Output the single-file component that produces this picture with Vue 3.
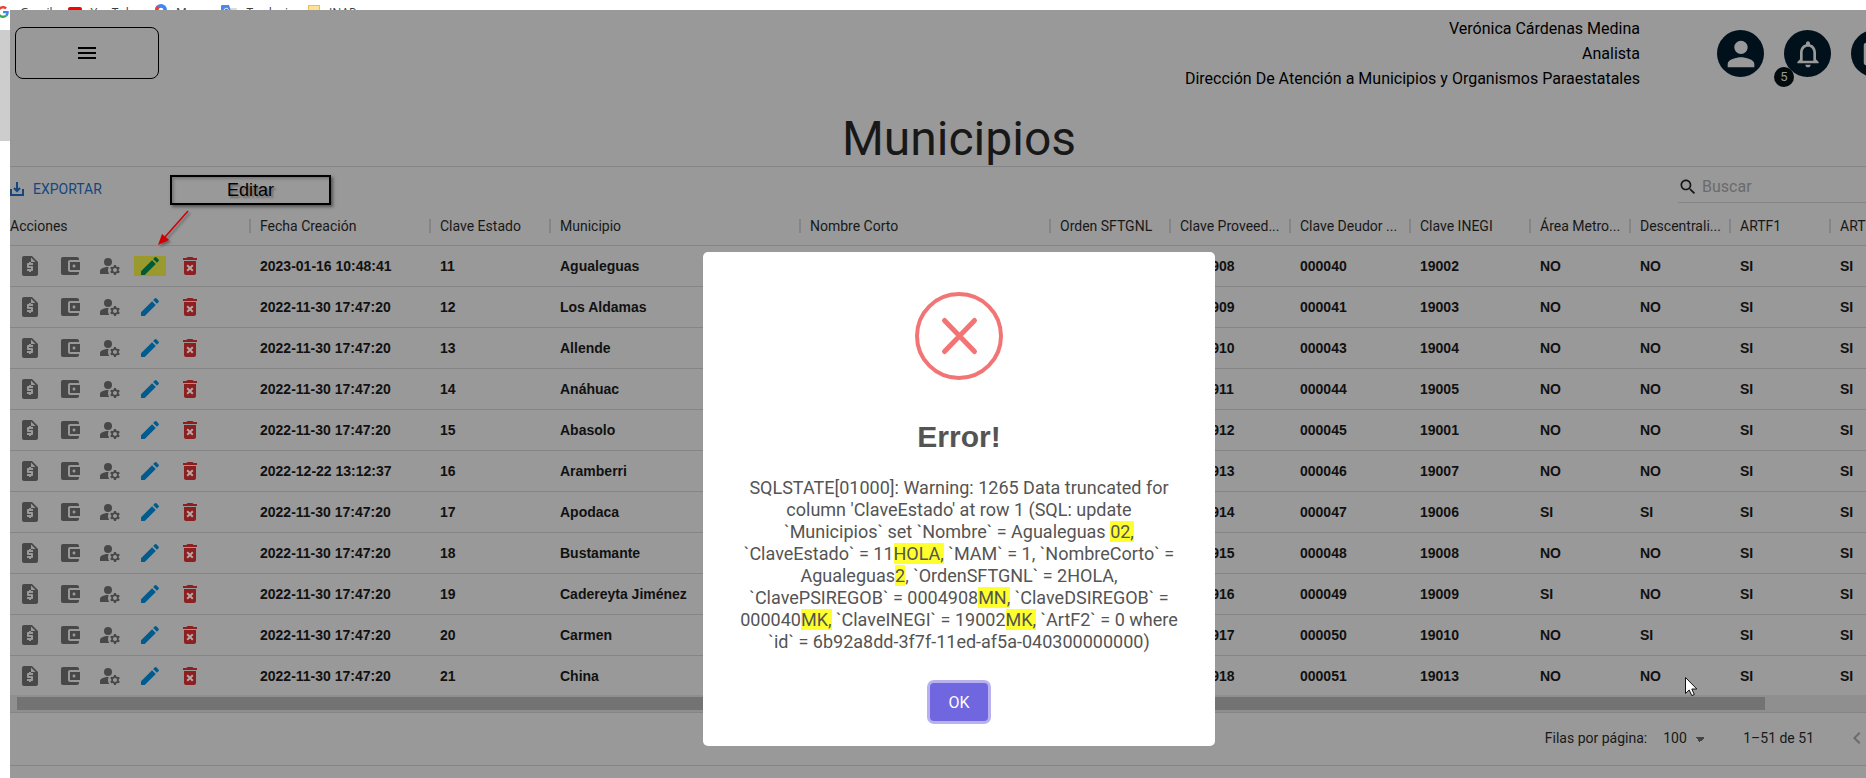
<script setup>
const bookmarks = [
  { name: 'Gmail', icon: 'none' },
  { name: 'YouTube', icon: 'youtube' },
  { name: 'Maps', icon: 'maps' },
  { name: 'Traducir', icon: 'translate' },
  { name: 'INAP', icon: 'folder' },
]

const columns = [
  { title: 'Acciones', cls: 'w-actions' },
  { title: 'Fecha Creación', cls: 'w-date' },
  { title: 'Clave Estado', cls: 'w-md' },
  { title: 'Municipio', cls: 'w-lg' },
  { title: 'Nombre Corto', cls: 'w-lg' },
  { title: 'Orden SFTGNL', cls: 'w-md' },
  { title: 'Clave Proveed...', cls: 'w-md' },
  { title: 'Clave Deudor ...', cls: 'w-md' },
  { title: 'Clave INEGI', cls: 'w-md' },
  { title: 'Área Metro...', cls: 'w-sm' },
  { title: 'Descentrali...', cls: 'w-sm' },
  { title: 'ARTF1', cls: 'w-sm' },
  { title: 'ARTF2', cls: 'w-sm' },
]

const old = '2022-11-30 17:47:20'
const rows = [
  ['2023-01-16 10:48:41', '11', 'Agualeguas', '0004908', '000040', '19002', 'NO', 'NO'],
  [old, '12', 'Los Aldamas', '0004909', '000041', '19003', 'NO', 'NO'],
  [old, '13', 'Allende', '0004910', '000043', '19004', 'NO', 'NO'],
  [old, '14', 'Anáhuac', '0004911', '000044', '19005', 'NO', 'NO'],
  [old, '15', 'Abasolo', '0004912', '000045', '19001', 'NO', 'NO'],
  ['2022-12-22 13:12:37', '16', 'Aramberri', '0004913', '000046', '19007', 'NO', 'NO'],
  [old, '17', 'Apodaca', '0004914', '000047', '19006', 'SI', 'SI'],
  [old, '18', 'Bustamante', '0004915', '000048', '19008', 'NO', 'NO'],
  [old, '19', 'Cadereyta Jiménez', '0004916', '000049', '19009', 'SI', 'NO'],
  [old, '20', 'Carmen', '0004917', '000050', '19010', 'NO', 'SI'],
  [old, '21', 'China', '0004918', '000051', '19013', 'NO', 'NO'],
].map(([date, state, name, prov, deb, inegi, metro, desc]) => ({
  state,
  cells: [date, state, name, '', '', prov, deb, inegi, metro, desc, 'SI', 'SI'],
}))
</script>

<template>
  <div class="window">
    <nav class="bookmarks" aria-label="Marcadores">
      <a v-for="b in bookmarks" :key="b.name" href="#" class="bookmark" :class="'bm-' + b.icon">
        <svg v-if="b.icon === 'youtube'" width="14" height="10" viewBox="0 0 14 10"><rect width="14" height="10" rx="2" fill="#f00" /><path d="M5.500 3v4l4-2z" fill="#fff" /></svg>
        <svg v-else-if="b.icon === 'maps'" width="12" height="16" viewBox="0 0 12 16"><path d="M6 0a6 6 0 0 0-6 6c0 4 6 10 6 10s6-6 6-10a6 6 0 0 0-6-6" fill="#4285f4" /><path d="M0 6a6 6 0 0 1 2-4.500L5 4 1 9z" fill="#ea4335" /><circle cx="6" cy="6" r="2.300" fill="#fff" /></svg>
        <svg v-else-if="b.icon === 'translate'" width="16" height="16" viewBox="0 0 16 16"><rect x="6" y="3" width="10" height="12" rx="1" fill="#dadce0" /><path d="M1 0h7l4 12H1a1 1 0 0 1-1-1V1a1 1 0 0 1 1-1" fill="#4f86ec" /><path d="M7.500 4.500a2.500 2.500 0 1 0 .3 2H5.500" fill="none" stroke="#fff" /></svg>
        <svg v-else-if="b.icon === 'folder'" width="12" height="14" viewBox="0 0 12 14"><rect x=".5" y=".5" width="11" height="13" fill="#fde293" stroke="#e9c04a" /></svg>
        <span>{{ b.name }}</span>
      </a>
    </nav>
    <svg class="google" width="12" height="12" viewBox="0 0 48 48" aria-hidden="true">
      <path fill="#EA4335" d="M24 9.500c3.540 0 6.710 1.220 9.210 3.600l6.850-6.850C35.900 2.380 30.470 0 24 0 14.620 0 6.510 5.380 2.560 13.220l7.980 6.190C12.430 13.720 17.740 9.500 24 9.500z" />
      <path fill="#4285F4" d="M46.980 24.550c0-1.570-.15-3.090-.38-4.550H24v9.020h12.940c-.58 2.960-2.260 5.480-4.780 7.180l7.730 6c4.510-4.180 7.090-10.360 7.090-17.650z" />
      <path fill="#FBBC05" d="M10.530 28.590A14.500 14.500 0 0 1 9.770 24c0-1.600.27-3.140.76-4.590l-7.980-6.190A24 24 0 0 0 0 24c0 3.880.92 7.540 2.560 10.780z" />
      <path fill="#34A853" d="M24 48c6.480 0 11.930-2.130 15.890-5.810l-7.730-6c-2.150 1.450-4.920 2.300-8.160 2.300-6.260 0-11.570-4.220-13.470-9.910l-7.980 6.190C6.510 42.620 14.620 48 24 48z" />
    </svg>
    <div class="side-strip"></div>

    <main class="page">
      <header class="topbar">
        <button class="menu-btn" aria-label="Menú">
          <svg width="24" height="24" viewBox="0 0 24 24"><path d="M3 18h18v-2H3zm0-5h18v-2H3zm0-7v2h18V6z" /></svg>
        </button>
        <div class="user">
          <p>Verónica Cárdenas Medina</p>
          <p>Analista</p>
          <p>Dirección De Atención a Municipios y Organismos Paraestatales</p>
        </div>
        <div class="quick">
          <button class="round" aria-label="Perfil">
            <svg width="40" height="40" viewBox="0 0 24 24"><path d="M12 12c2.210 0 4-1.790 4-4s-1.790-4-4-4-4 1.790-4 4 1.790 4 4 4m0 2c-2.670 0-8 1.340-8 4v2h16v-2c0-2.660-5.330-4-8-4" /></svg>
          </button>
          <button class="round" aria-label="Notificaciones">
            <svg width="32" height="32" viewBox="0 0 24 24"><path d="M12 22c1.100 0 2-.9 2-2h-4c0 1.100.9 2 2 2m6-6v-5c0-3.070-1.630-5.640-4.500-6.320V4c0-.83-.67-1.500-1.500-1.500s-1.500.67-1.500 1.500v.68C7.640 5.360 6 7.920 6 11v5l-2 2v1h16v-1zm-2 1H8v-6c0-2.480 1.510-4.500 4-4.500s4 2.020 4 4.500z" /></svg>
            <span class="badge">5</span>
          </button>
          <button class="round" aria-label="Calendario">
            <svg width="30" height="30" viewBox="0 0 24 24"><path d="M19 3h-1V1h-2v2H8V1H6v2H5c-1.110 0-2 .9-2 2v14c0 1.100.89 2 2 2h14c1.100 0 2-.9 2-2V5c0-1.100-.9-2-2-2m0 16H5V8h14zM7 10h5v5H7z" /></svg>
          </button>
        </div>
      </header>

      <h1>Municipios</h1>

      <section class="grid">
        <div class="toolbar">
          <button class="export">
            <svg width="16" height="16" viewBox="0 0 16 16"><path d="M2 8v6h12V8M8 1v9M5 7l3 3 3-3" fill="none" stroke="currentColor" stroke-width="2" /></svg>
            EXPORTAR
          </button>
          <label class="search">
            <svg width="20" height="20" viewBox="0 0 24 24"><path d="M15.500 14h-.79l-.28-.27C15.410 12.590 16 11.110 16 9.500 16 5.910 13.090 3 9.500 3S3 5.910 3 9.500 5.910 16 9.500 16c1.610 0 3.090-.59 4.230-1.570l.27.28v.79l5 4.990L20.490 19zm-6 0C7.010 14 5 11.990 5 9.500S7.010 5 9.500 5 14 7.010 14 9.500 11.990 14 9.500 14" /></svg>
            <input type="text" placeholder="Buscar" aria-label="Buscar" />
          </label>
        </div>

        <table>
          <thead>
            <tr>
              <th v-for="c in columns" :key="c.title" scope="col" :class="c.cls"><span>{{ c.title }}</span></th>
            </tr>
          </thead>
          <tbody>
            <tr v-for="(r, i) in rows" :key="r.state">
              <td>
                <div class="actions">
                  <button aria-label="Solicitud"><svg viewBox="0 0 24 24"><path d="M14 2H6c-1.100 0-1.990.9-1.990 2L4 20c0 1.100.89 2 1.990 2H18c1.100 0 2-.9 2-2V8zm1 9h-4v1h3c.55 0 1 .45 1 1v3c0 .55-.45 1-1 1h-1v1h-2v-1H9v-2h4v-1h-3c-.55 0-1-.45-1-1v-3c0-.55.45-1 1-1h1V8h2v1h2zm-2-3V3.500L17.500 8z" /></svg></button>
                  <button aria-label="Cuentas"><svg viewBox="0 0 24 24"><path d="M21 18v1c0 1.100-.9 2-2 2H5c-1.110 0-2-.9-2-2V5c0-1.100.89-2 2-2h14c1.100 0 2 .9 2 2v1h-9c-1.110 0-2 .9-2 2v8c0 1.100.89 2 2 2zm-9-2h10V8H12zm4-2.500c-.83 0-1.500-.67-1.500-1.500s.67-1.500 1.500-1.500 1.500.67 1.500 1.500-.67 1.500-1.500 1.500" /></svg></button>
                  <button aria-label="Usuarios"><svg viewBox="0 0 24 24"><circle cx="10" cy="8" r="4" /><path d="M10.670 13.020c-.22-.01-.44-.02-.67-.02-2.420 0-4.680.67-6.610 1.820-.88.52-1.390 1.500-1.390 2.530V20h9.260c-.79-1.130-1.260-2.510-1.260-4 0-1.070.25-2.070.67-2.980M20.750 16c0-.22-.03-.42-.06-.63l1.140-1.010-1-1.730-1.450.49c-.32-.27-.68-.48-1.080-.63L18 11h-2l-.3 1.490c-.4.15-.76.36-1.080.63l-1.450-.49-1 1.730 1.140 1.010c-.03.21-.06.410-.06.63s.03.42.06.63l-1.140 1.010 1 1.730 1.450-.49c.32.27.68.48 1.080.63L16 21h2l.3-1.490c.4-.15.76-.36 1.080-.63l1.450.49 1-1.730-1.140-1.010c.03-.21.06-.410.06-.63M17 18c-1.100 0-2-.9-2-2s.9-2 2-2 2 .9 2 2-.9 2-2 2" /></svg></button>
                  <button class="edit" :class="{ marked: i === 0 }" aria-label="Editar"><svg viewBox="0 0 24 24"><path d="M3 17.250V21h3.750L17.810 9.940l-3.750-3.750zM20.710 7.040c.39-.39.39-1.020 0-1.410l-2.340-2.340a.996.996 0 0 0-1.410 0l-1.830 1.830 3.750 3.750z" /></svg></button>
                  <button class="delete" aria-label="Eliminar"><svg viewBox="0 0 24 24"><path class="cross" d="M8 10h8v8H8z" /><path d="M6 19c0 1.100.9 2 2 2h8c1.100 0 2-.9 2-2V7H6zm2.460-7.120 1.410-1.410L12 12.590l2.120-2.120 1.410 1.410L13.410 14l2.120 2.120-1.410 1.410L12 15.410l-2.120 2.120-1.410-1.410L10.590 14zM15.500 4l-1-1h-5l-1 1H5v2h14V4z" /></svg></button>
                </div>
              </td>
              <td v-for="(cell, j) in r.cells" :key="j">{{ cell }}</td>
            </tr>
          </tbody>
        </table>

        <div class="scroll"><div class="thumb"></div></div>

        <footer class="pager">
          <label for="per-page">Filas por página:</label>
          <select id="per-page"><option>100</option></select>
          <span class="range">1–51 de 51</span>
          <button aria-label="Página anterior"><svg width="24" height="24" viewBox="0 0 24 24"><path d="M15.410 7.410 14 6l-6 6 6 6 1.410-1.410L10.830 12z" /></svg></button>
        </footer>
      </section>

      <div class="backdrop">
        <div class="modal" role="dialog" aria-labelledby="err-title">
          <svg class="err-icon" width="88" height="88" viewBox="0 0 88 88"><circle cx="44" cy="44" r="42" /><path class="x" d="M29.500 28.500l30 31M59.500 28.500l-30 31" /></svg>
          <h2 id="err-title">Error!</h2>
          <p class="message">
            SQLSTATE[01000]: Warning: 1265 Data truncated for<br />
            column 'ClaveEstado' at row 1 (SQL: update<br />
            `Municipios` set `Nombre` = Agualeguas <mark>02,</mark><br />
            `ClaveEstado` = 11<mark>HOLA,</mark> `MAM` = 1, `NombreCorto` =<br />
            Agualeguas<mark>2</mark>, `OrdenSFTGNL` = 2HOLA,<br />
            `ClavePSIREGOB` = 0004908<mark>MN,</mark> `ClaveDSIREGOB` =<br />
            000040<mark>MK,</mark> `ClaveINEGI` = 19002<mark>MK,</mark> `ArtF2` = 0 where<br />
            `id` = 6b92a8dd-3f7f-11ed-af5a-040300000000)
          </p>
          <button class="ok">OK</button>
        </div>
      </div>
    </main>

    <div class="callout">Editar</div>
    <svg class="arrow" width="40" height="44" viewBox="0 0 40 44" aria-hidden="true"><path d="M33 3 10 29" stroke="#d00000" stroke-width="1.500" /><path d="M3 37 7 26l7 6z" fill="#d00000" /></svg>
    <svg class="cursor" width="13" height="20" viewBox="0 0 13 20" aria-hidden="true"><path d="M.5.500v16l3.700-3.500 2.600 5.600 2.500-1.100-2.500-5.500h5z" fill="#fff" stroke="#111" /></svg>
  </div>
</template>

<style>
html, body { overflow: hidden; background: #fff; }
</style>

<style scoped>
.window { position: relative; height: 100vh; overflow: hidden; font-family: Roboto, sans-serif; color: #181818; background: #fff; }
.window * { box-sizing: border-box; }
button { padding: 0; border: 0; background: none; font: inherit; color: inherit; }
svg { display: block; fill: currentColor; flex: none; }

.bookmarks { height: 10px; padding-left: 20px; display: flex; align-items: flex-start; gap: 15px; overflow: hidden; }
.bookmark { display: flex; gap: 9px; font: 12px/16px "Open Sans", sans-serif; color: #3c4043; text-decoration: none; padding-top: 5px; }
.bm-youtube svg { margin-top: 2px; }
.bm-maps svg { margin-top: -1px; }
.google { position: absolute; left: -3px; top: 6px; z-index: 1; }
.side-strip { position: absolute; left: 0; top: 30px; width: 10px; height: 111px; background: #cdcdcd; }

.page { position: relative; margin: 0 -42px 0 10px; min-height: calc(100vh - 10px); background: #999; }
.topbar { height: 87px; padding: 7px 0 0 5px; display: flex; align-items: flex-start; }
.menu-btn { width: 144px; height: 52px; margin-top: 10px; border: 1px solid #000; border-radius: 8px; display: flex; align-items: center; justify-content: center; color: #000; }
.user { margin-left: auto; text-align: right; font-size: 16px; line-height: 24px; color: #000; }
.user p { margin: 0 0 1px; }
.quick { display: flex; gap: 20px; margin: 13px 10px 0 77px; }
.round { position: relative; width: 47px; height: 47px; border-radius: 50%; background: #01111b; color: #999; display: flex; align-items: center; justify-content: center; }
.badge { position: absolute; left: -10px; bottom: -10px; width: 20px; height: 20px; border-radius: 50%; background: #020b0e; font-size: 13px; line-height: 20px; text-align: center; }

h1 { margin: 0; height: 69px; font-size: 48px; line-height: 84px; font-weight: 400; text-align: center; }

.grid { border-top: 1px solid #858585; border-bottom: 1px solid #858585; }
.toolbar { height: 41px; display: flex; justify-content: space-between; align-items: flex-start; }
.export { display: flex; align-items: center; gap: 8px; height: 44px; margin-left: -1px; font-size: 14px; color: #15477e; }
.search { display: flex; align-items: center; gap: 4px; height: 36px; width: 230px; padding-top: 4px; border-bottom: 1px solid #858585; }
.search input { border: 0; background: none; padding: 0; min-width: 0; flex: 1; font: 16px/24px Roboto, sans-serif; outline: 0; }
.search input::placeholder { color: #6b6b6b; opacity: 1; }

table { width: 1920px; table-layout: fixed; border-collapse: separate; border-spacing: 0; }
th { position: relative; height: 38px; padding: 0 2px 2px 10px; font-size: 14px; line-height: 20px; font-weight: 400; text-align: left; border-bottom: 1px solid #858585; }
th span { display: block; overflow: hidden; white-space: nowrap; text-overflow: ellipsis; }
th + th::before { content: ""; position: absolute; left: -1px; top: 11px; width: 2px; height: 14px; background: #858585; }
th:first-child, td:first-child { padding-left: 0; }
.w-actions { width: 240px; }
.w-date { width: 180px; }
.w-md { width: 120px; }
.w-lg { width: 250px; }
.w-sm { width: 100px; }
td { height: 41px; padding: 0 10px; font: bold 14px/20px "Liberation Sans", Arial, sans-serif; color: #111; border-bottom: 1px solid #858585; white-space: nowrap; }
tr:last-child td { height: 39px; border-bottom: 0; }
.actions { display: flex; align-items: center; padding-left: 4px; gap: 8px; }
.actions button { width: 32px; height: 20px; display: flex; align-items: center; justify-content: center; color: #484848; }
.actions svg { width: 24px; height: 24px; }
.actions .edit { color: #005b8f; }
.actions .marked { background: #99992e; color: #005a35; }
.actions .delete { color: #8c1f1f; }
.cross { fill: #b5a5a5; }

.scroll { height: 18px; padding: 2px 143px 3px 7px; background: #8f8f8f; border-bottom: 1px solid #858585; }
.thumb { height: 13px; background: #737373; }

.pager { height: 52px; padding: 0 39px 2px 0; display: flex; align-items: center; justify-content: flex-end; font-size: 14px; line-height: 20px; }
.pager select { appearance: none; width: 44px; height: 20px; margin: 0 36px 0 16px; padding: 0; border: 0; font: inherit; color: inherit; background: linear-gradient(to bottom right, #444 50%, transparent 50%) 37px 9px / 5px 5px no-repeat, linear-gradient(to bottom left, #444 50%, transparent 50%) 32px 9px / 5px 5px no-repeat; }
.pager button { margin-left: 31px; color: #6b6b6b; }

.backdrop { position: absolute; inset: 0; padding-bottom: 32px; display: flex; align-items: flex-end; justify-content: center; pointer-events: none; }
.modal { width: 512px; padding: 40px 20px 25px; background: #fff; border-radius: 5px; color: #545454; text-align: center; pointer-events: auto; display: flex; flex-direction: column; align-items: center; }
.err-icon circle { fill: none; stroke: #f27474; stroke-width: 4; }
.err-icon .x { fill: none; stroke: #f27474; stroke-width: 5; stroke-linecap: round; }
h2 { margin: 37px 0 0; font: bold 30px/40px "Liberation Sans", Arial, sans-serif; }
.message { margin: 20px 0 0; font-size: 18px; line-height: 22px; white-space: nowrap; }
mark { background: #ffff2e; color: inherit; }
.ok { width: 58px; height: 38px; margin-top: 30px; border-radius: 4px; background: #7066e0; color: #fff; font-size: 16px; box-shadow: 0 0 0 3px #b7b2ef; }

.callout { position: absolute; left: 170px; top: 175px; width: 161px; height: 30px; border: 2px solid #000; font: 18px/26px "Liberation Sans", Arial, sans-serif; color: #000; text-align: center; text-shadow: 2px 2px 2px #666; box-shadow: 2px 2px 3px #555, inset 2px 2px 3px #777; }
.arrow { position: absolute; left: 155px; top: 208px; filter: drop-shadow(2px 2px 1px #666); }
.cursor { position: absolute; left: 1685px; top: 677px; }
</style>
